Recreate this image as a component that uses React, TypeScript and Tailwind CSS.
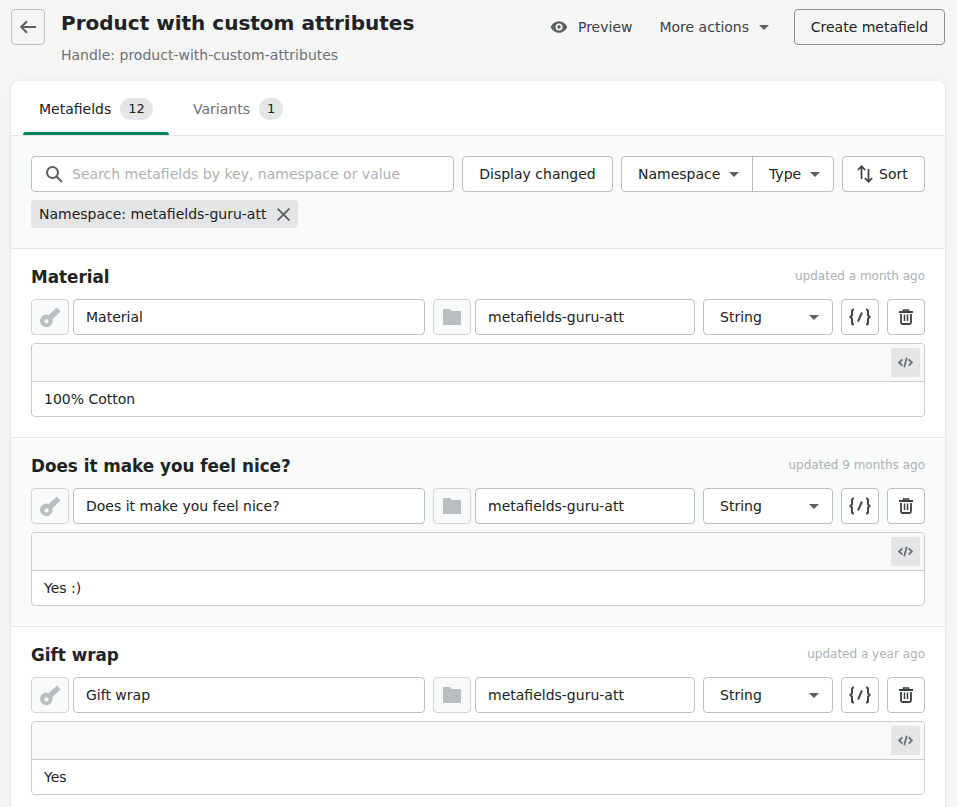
import { FC } from 'react';

const Caret = ({ className = '' }: { className?: string }) => (
    <svg className={`w-[10px] h-[5px] shrink-0 ${className}`} viewBox="0 0 10 5" fill="#5c5f62">
        <path d="M0 0h10L5 5z" />
    </svg>
);

const BackIcon = () => (
    <svg className="w-5 h-5" viewBox="0 0 20 20" fill="none" stroke="#5c5f62" strokeWidth={2}>
        <path d="M18 10H3.5M9 4.200 3.200 10 9 15.800" />
    </svg>
);

const SearchIcon = () => (
    <svg className="w-[18px] h-[18px] shrink-0" viewBox="0 0 18 18" fill="none" stroke="#5c5f62" strokeWidth={2}>
        <circle cx="7.500" cy="7.500" r="5.500" />
        <path d="m11.500 11.500 5.500 5.500" />
    </svg>
);

const EyeIcon = () => (
    <svg className="w-[18px] h-[18px] shrink-0" viewBox="0 0 18 18" fill="#5c5f62">
        <path
            fillRule="evenodd"
            d="M9 3.200C4.800 3.200 1.700 6.500.8 9c.9 2.500 4 5.800 8.200 5.800s7.300-3.300 8.200-5.800C16.300 6.500 13.200 3.200 9 3.200zm0 2.300a3.500 3.500 0 1 1 0 7 3.500 3.500 0 0 1 0-7z"
        />
        <circle cx="9" cy="9" r="1.800" />
    </svg>
);

const SortIcon = () => (
    <svg className="w-[18px] h-[18px] shrink-0" viewBox="0 0 18 18" fill="none" stroke="#3d4043" strokeWidth={1.700}>
        <path d="M5.500 14V1.500M1.800 5 5.500 1.300 9.200 5M12.500 4v12.500M8.800 13l3.700 3.700 3.700-3.700" />
    </svg>
);

const CloseIcon = () => (
    <svg className="w-[13px] h-[13px] shrink-0" viewBox="0 0 13 13" fill="none" stroke="#5c5f62" strokeWidth={1.800}>
        <path d="m.6.600 11.800 11.800M12.400.600.6 12.400" />
    </svg>
);

const KeyIcon = () => (
    <svg className="w-[21px] h-[21px]" viewBox="0 0 21 21" fill="#babec3">
        <path
            fillRule="evenodd"
            d="M17 .5 20.500 4.500 12.400 12.200A6.300 6.300 0 1 1 8.600 8zM6.500 12.300a2.100 2.100 0 1 0 0 4.200 2.100 2.100 0 0 0 0-4.200z"
        />
    </svg>
);

const FolderIcon = () => (
    <svg className="w-[18px] h-[18px]" viewBox="0 0 18 18" fill="#babec3">
        <path d="M0 1.500A.5.5 0 0 1 .5 1h6.200L9 3h8.500a.5.5 0 0 1 .5.5v13a.5.5 0 0 1-.5.5H.5a.5.5 0 0 1-.5-.5z" />
    </svg>
);

const TrashIcon = () => (
    <svg className="w-4 h-[18px]" viewBox="0 0 16 18" fill="none" stroke="#3d4043">
        <path d="M1 4h14" strokeWidth={2} />
        <path d="M5.500 3.500v-1.500h5v1.500" strokeWidth={1.500} />
        <path d="M3 6v8.500A1.500 1.500 0 0 0 4.500 16h7a1.500 1.500 0 0 0 1.500-1.500V6" strokeWidth={1.800} />
        <path d="M6.500 6.500v6.500M9.500 6.500v6.500" strokeWidth={1.500} />
    </svg>
);

const CodeIcon = () => (
    <svg className="w-[15px] h-[11px]" viewBox="0 0 14 10" fill="none" stroke="#6d7175" strokeWidth={1.700}>
        <path d="M4 2 1 5l3 3M10 2l3 3-3 3M8.200.5 5.800 9.500" />
    </svg>
);

const BracesIcon = () => (
    <svg className="w-[22px] h-[18px]" viewBox="0 0 22 18" fill="none" stroke="#454749" strokeWidth={2}>
        <path d="M5 1.500H4.500A1.500 1.500 0 0 0 3 3v4.300L1.400 9 3 10.700V15a1.500 1.500 0 0 0 1.500 1.500H5" />
        <path d="M17 1.500h.5A1.500 1.500 0 0 1 19 3v4.300L20.600 9 19 10.700V15a1.500 1.500 0 0 1-1.500 1.500H17" />
        <path d="m13 4.500-4 9" />
    </svg>
);

interface FieldProps {
    title: string;
    updated: string;
    value: string;
    tinted?: boolean;
}

const btn = 'h-9 shrink-0 flex items-center justify-center bg-white border border-[#babfc3] rounded-[4px] text-[#202223]';

const MetafieldRow: FC<FieldProps> = ({ title, updated, value, tinted }) => (
    <section className={`h-[189px] border-t border-[#e4e5e7] px-5 pt-[15px] ${tinted ? 'bg-[#f9fafa]' : 'bg-white'}`}>
        <div className="h-[26px] flex items-center justify-between">
            <h2 className="text-[16.8px] font-bold text-[#202223]">{title}</h2>
            <span className="text-[12px] text-[#aeb1b4] -mt-[3px]">{updated}</span>
        </div>
        <div className="mt-[9px] flex">
            <div className="w-[38px] h-9 shrink-0 flex items-center justify-center bg-[#f9fafb] border border-[#d2d5d8] rounded-[4px]">
                <KeyIcon />
            </div>
            <div className={`${btn} ml-1 w-[352px] !justify-start pl-3`}>{title}</div>
            <div className="ml-2 w-[38px] h-9 shrink-0 flex items-center justify-center bg-[#f9fafb] border border-[#d2d5d8] rounded-[4px]">
                <FolderIcon />
            </div>
            <div className={`${btn} ml-1 w-[220px] !justify-start pl-3`}>metafields-guru-att</div>
            <div className={`${btn} ml-2 w-[130px] !justify-between pl-4 pr-[13px]`}>
                String
                <Caret />
            </div>
            <div className={`${btn} ml-2 w-[38px]`}>
                <BracesIcon />
            </div>
            <div className={`${btn} ml-2 w-[38px]`}>
                <TrashIcon />
            </div>
        </div>
        <div className="mt-2 h-[74px] border border-[#c9cccf] rounded-[4px] overflow-hidden bg-white">
            <div className="h-[38px] bg-[#f9f9f9] border-b border-[#c9cccf] flex items-center justify-end pr-1">
                <div className="w-[29px] h-[29px] flex items-center justify-center bg-[#e4e5e7] rounded-[2px]">
                    <CodeIcon />
                </div>
            </div>
            <div className="h-[34px] flex items-center pl-3 text-[#202223]">{value}</div>
        </div>
    </section>
);

const App: FC = () => {
    return (
        <div className="h-[807px] overflow-hidden bg-[#f6f6f7] pl-[11px] pr-3 pt-[9px] text-[14px] leading-5 font-['DejaVu_Sans',sans-serif] text-[#202223]">
            {/* Page header */}
            <header className="h-[72px] flex items-start">
                <button className="w-[34px] h-9 flex items-center justify-center border border-[#babfc3] rounded-[4px]">
                    <BackIcon />
                </button>
                <div className="ml-4">
                    <h1 className="text-[20px] leading-7 font-bold text-[#202223]">Product with custom attributes</h1>
                    <p className="mt-2 text-[#6d7175]">Handle: product-with-custom-attributes</p>
                </div>
                <div className="ml-auto flex items-center h-9">
                    <div className="flex items-center gap-[10px] text-[#3d4043]">
                        <EyeIcon />
                        Preview
                    </div>
                    <div className="ml-[27px] flex items-center gap-[10px] text-[#3d4043]">
                        More actions
                        <Caret />
                    </div>
                    <button className="ml-[25px] w-[151px] h-9 border border-[#8c9196] rounded-[4px] text-[#202223]">
                        Create metafield
                    </button>
                </div>
            </header>

            {/* Main card */}
            <main className="bg-white rounded-t-[8px] shadow-[0_0_5px_rgba(23,24,24,0.05),0_1px_2px_rgba(0,0,0,0.15)]">
                <nav className="h-[55px] border-b border-[#e1e3e5] flex items-end pl-3">
                    <div className="relative h-[54px] w-[146px] flex items-center pt-[2px] pl-4 gap-[9px]">
                        Metafields
                        <span className="h-[22px] px-[8px] flex items-center bg-[#e4e5e7] rounded-full text-[13px]">12</span>
                        <div className="absolute left-0 right-0 bottom-0 h-[3px] bg-[#008060] rounded-t-[3px]" />
                    </div>
                    <div className="h-[54px] flex items-center pt-[2px] ml-[24px] gap-[9px] text-[#6d7175]">
                        Variants
                        <span className="h-[22px] px-[8px] flex items-center bg-[#e4e5e7] rounded-full text-[13px] text-[#202223]">1</span>
                    </div>
                </nav>

                {/* Filters */}
                <div className="h-[112px] bg-[#f9fafa] px-5 pt-5">
                    <div className="flex">
                        <div className={`${btn} w-[423px] !justify-start pl-[13px] gap-[9px] text-[#aeb1b4]`}>
                            <SearchIcon />
                            Search metafields by key, namespace or value
                        </div>
                        <button className={`${btn} ml-2 w-[151px]`}>Display changed</button>
                        <div className={`${btn} ml-2 w-[213px] !justify-start`}>
                            <div className="w-[131px] h-full flex items-center justify-between pl-4 pr-[13px] border-r border-[#babfc3]">
                                Namespace
                                <Caret />
                            </div>
                            <div className="flex-1 flex items-center justify-between pl-4 pr-[13px]">
                                Type
                                <Caret />
                            </div>
                        </div>
                        <button className={`${btn} ml-2 w-[83px] !justify-start pl-[13px] gap-[5px]`}>
                            <SortIcon />
                            Sort
                        </button>
                    </div>
                    <div className="mt-2 inline-flex h-7 items-center gap-[11px] pl-2 pr-[8px] bg-[#e4e5e7] rounded-[4px]">
                        Namespace: metafields-guru-att
                        <CloseIcon />
                    </div>
                </div>

                <MetafieldRow title="Material" updated="updated a month ago" value="100% Cotton" />
                <MetafieldRow title="Does it make you feel nice?" updated="updated 9 months ago" value="Yes :)" tinted />
                <MetafieldRow title="Gift wrap" updated="updated a year ago" value="Yes" />
            </main>
        </div>
    );
};

export default App;
